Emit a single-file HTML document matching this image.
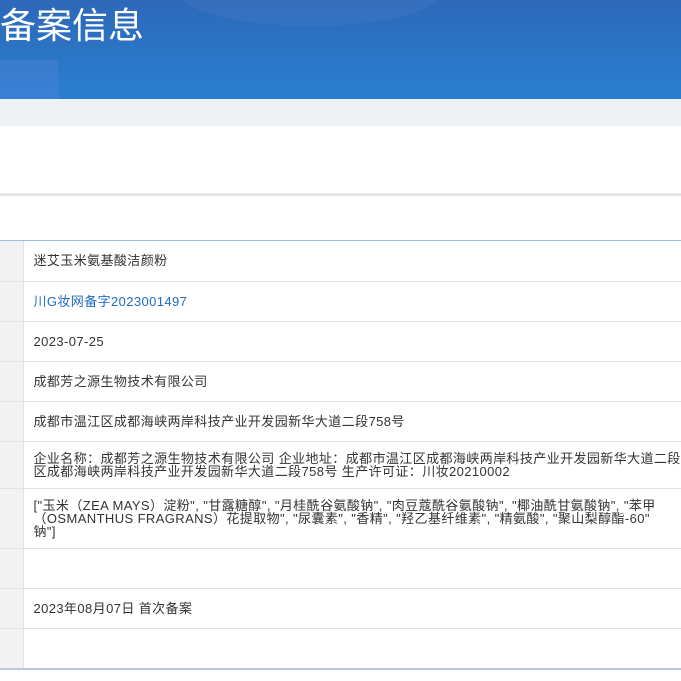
<!DOCTYPE html>
<html><head><meta charset="utf-8"><style>
*{margin:0;padding:0;box-sizing:border-box}
html,body{width:681px;height:681px;overflow:hidden}
body{background:#fff;font-family:"Liberation Sans","Noto Sans CJK SC",sans-serif;color:#333;position:relative}
.hd{position:absolute;left:0;top:0;width:681px;height:99px;background:linear-gradient(180deg,#2d68b9 0%,#2a7fd0 100%);overflow:hidden}
.hd h1{position:absolute;left:0;top:0px;font-size:36px;line-height:52px;font-weight:normal;color:#fff}
.b1{position:absolute;left:180px;top:-40px;width:260px;height:66px;border-radius:50%;background:rgba(255,255,255,0.04)}
.b3{position:absolute;left:-10px;top:60px;width:68px;height:60px;background:rgba(120,140,230,0.2)}
.gb{position:absolute;left:0;top:99px;width:681px;height:27px;background:#eff2f5}
.gl{position:absolute;left:0;top:193px;width:681px;height:3px;background:#e6e6e6}
.bl{position:absolute;left:0;top:240px;width:681px;height:1px;background:#9cbbe6}
.bl2{position:absolute;left:0;top:668px;width:681px;height:2px;background:#b7c8e0}
.wrap{position:absolute;left:0;top:241px;width:681px;height:428px;overflow:hidden}
table{border-collapse:collapse;width:760px;font-size:13px;letter-spacing:0.4px}
td{border-bottom:1px solid #e3e3e3;vertical-align:middle}
td.l{width:23px;background:#f2f2f2;border-right:1px solid #e3e3e3}
td.r{padding-left:10px;line-height:13px;white-space:nowrap}
a{color:#1f6cc0;text-decoration:none}
</style></head><body>
<div class="hd"><div class="b1"></div><div class="b3"></div><h1>备案信息</h1></div>
<div class="gb"></div>
<div class="gl"></div>
<div class="bl"></div>
<div class="wrap">
<table>
<tr style="height:40px"><td class="l"></td><td class="r">迷艾玉米氨基酸洁颜粉</td></tr>
<tr style="height:40px"><td class="l"></td><td class="r"><a>川G妆网备字2023001497</a></td></tr>
<tr style="height:40px"><td class="l"></td><td class="r">2023-07-25</td></tr>
<tr style="height:40px"><td class="l"></td><td class="r">成都芳之源生物技术有限公司</td></tr>
<tr style="height:40px"><td class="l"></td><td class="r">成都市温江区成都海峡两岸科技产业开发园新华大道二段758号</td></tr>
<tr style="height:47px"><td class="l"></td><td class="r">企业名称：成都芳之源生物技术有限公司 企业地址：成都市温江区成都海峡两岸科技产业开发园新华大道二段758号<br>区成都海峡两岸科技产业开发园新华大道二段758号 生产许可证：川妆20210002</td></tr>
<tr style="height:60px"><td class="l"></td><td class="r">["玉米（ZEA MAYS）淀粉", "甘露糖醇", "月桂酰谷氨酸钠", "肉豆蔻酰谷氨酸钠", "椰油酰甘氨酸钠", "苯甲<br>（OSMANTHUS FRAGRANS）花提取物", "尿囊素", "香精", "羟乙基纤维素", "精氨酸", "聚山梨醇酯-60"<br>钠"]</td></tr>
<tr style="height:40px"><td class="l"></td><td class="r"></td></tr>
<tr style="height:40px"><td class="l"></td><td class="r">2023年08月07日 首次备案</td></tr>
<tr style="height:40px"><td class="l" style="border-bottom:none"></td><td class="r" style="border-bottom:none"></td></tr>
</table>
</div>
<div class="bl2"></div>
</body></html>
